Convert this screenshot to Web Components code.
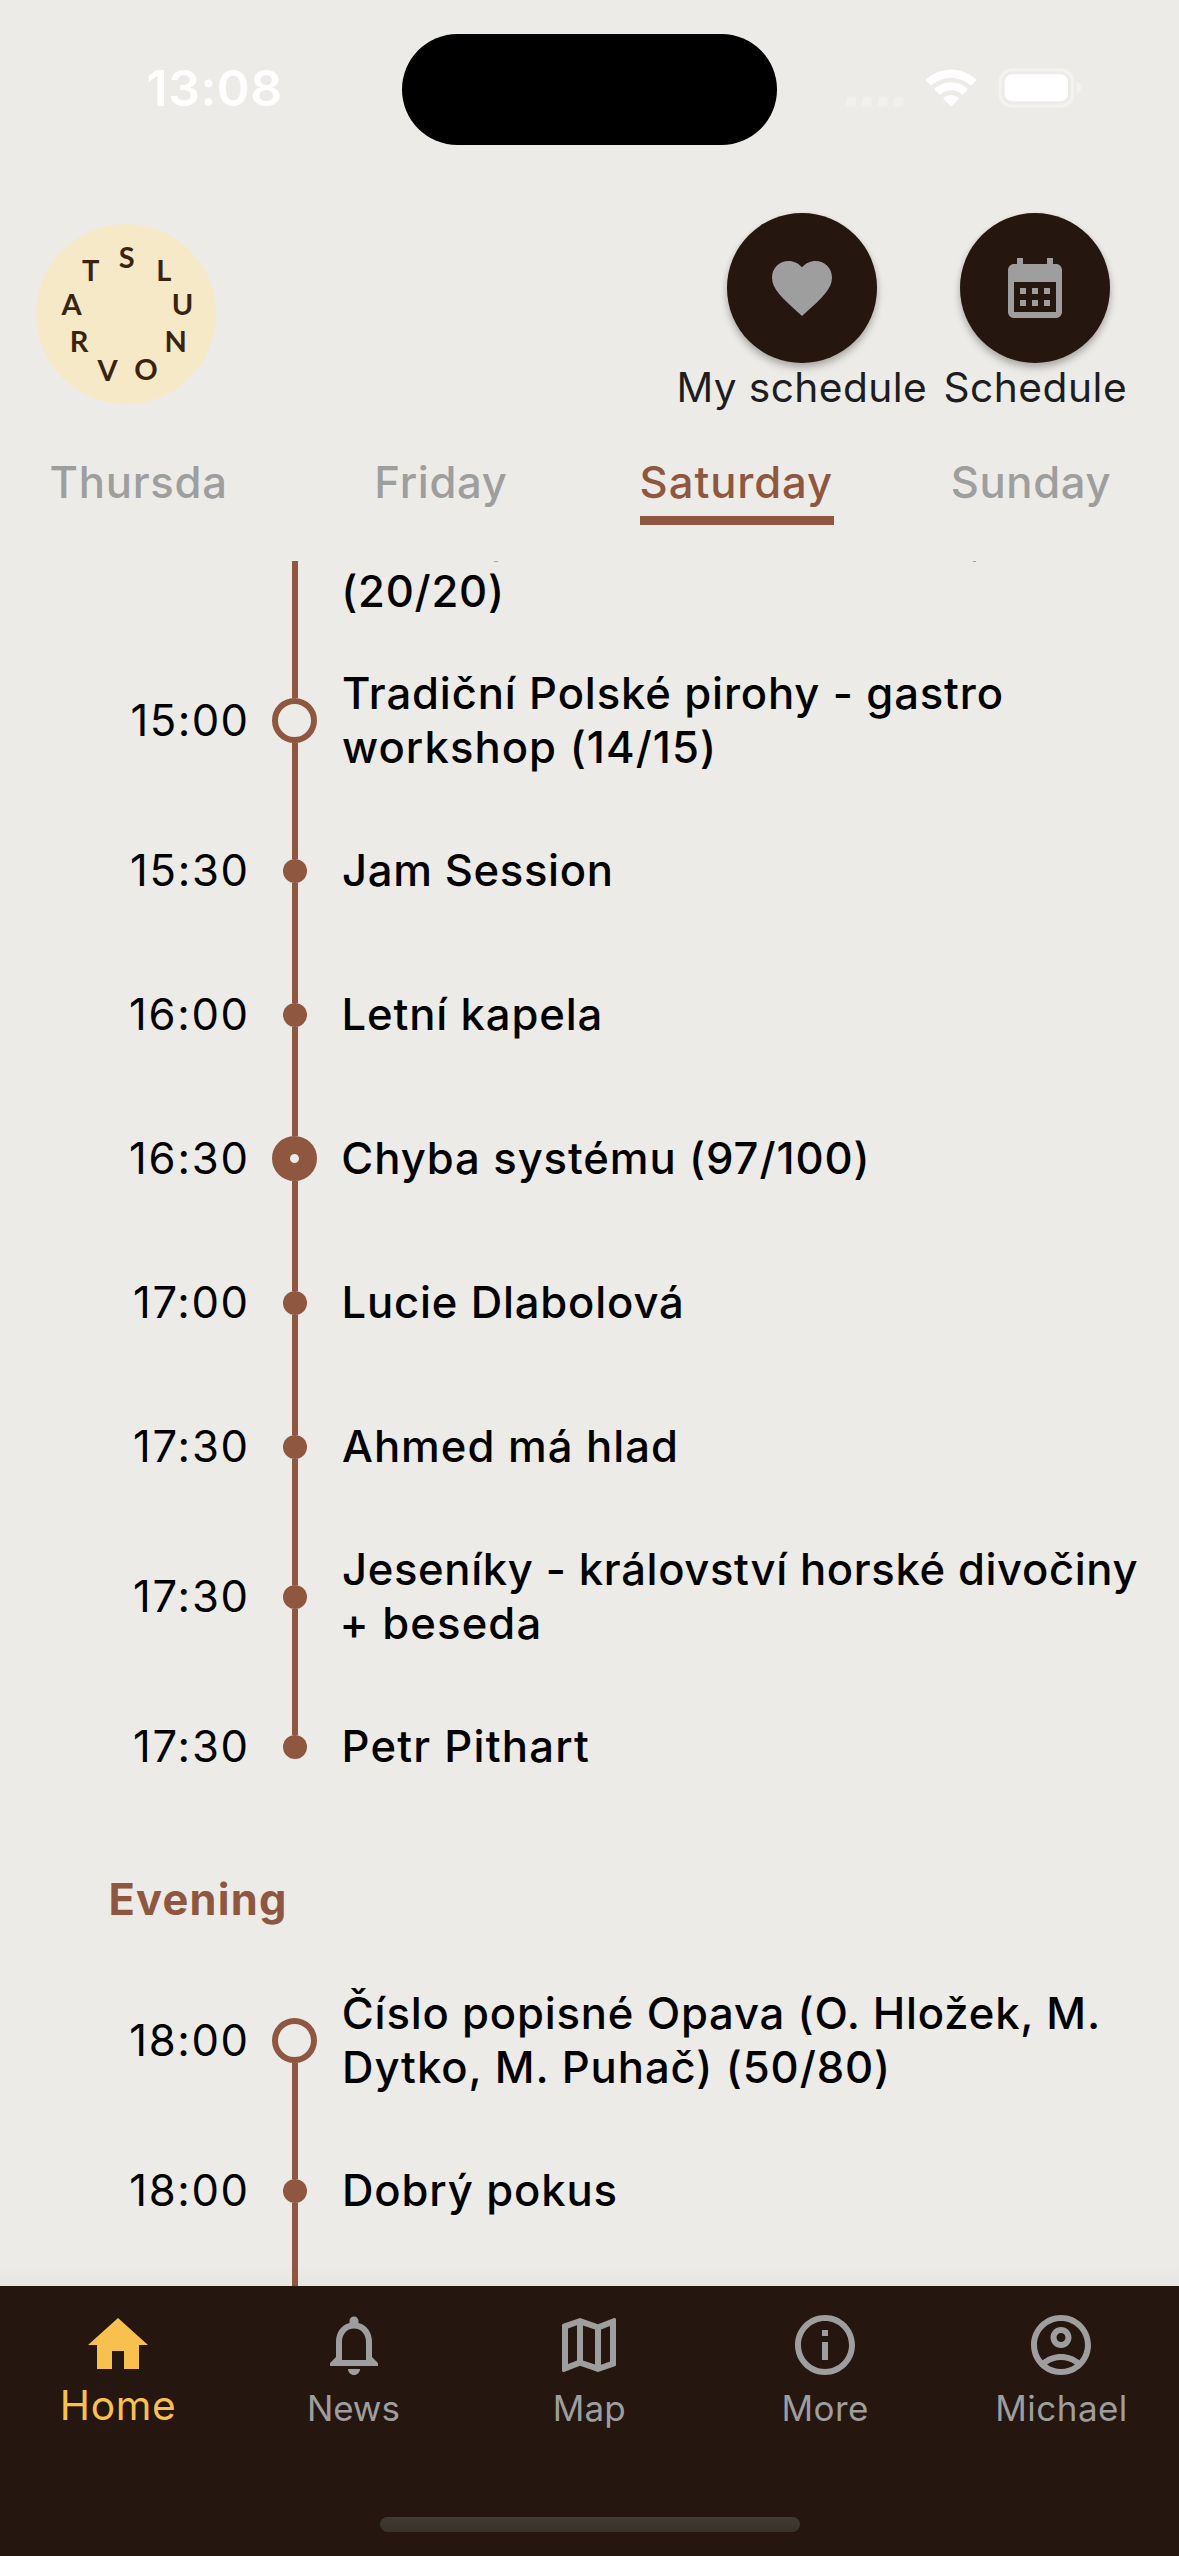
<!DOCTYPE html>
<html lang="en">
<head>
<meta charset="utf-8">
<title>Schedule</title>
<style>
  html, body { margin: 0; padding: 0; }
  body { width: 1179px; height: 2556px; overflow: hidden; background: #ecebe7; font-family: Inter, Roboto, "Liberation Sans", sans-serif; }
</style>
</head>
<body>
<festival-app></festival-app>

<template id="tpl-app">
  <style>
    :host { display: flex; flex-direction: column; width: 1179px; height: 2556px; background: #ecebe7; color: #000; }
    .list { flex: 1; min-height: 0; overflow: hidden; display: flex; flex-direction: column; position: relative; }
    .list > * { flex: none; }
    .fade { position: absolute; left: 0; right: 0; bottom: 0; height: 22px; background: linear-gradient(rgba(37,22,15,0), rgba(37,22,15,.025)); }
    .tabs { display: flex; height: 105px; padding-top: 20px; flex: none; }
  </style>
  <status-bar></status-bar>
  <app-header></app-header>
  <div class="tabs">
    <day-tab shift="20"><fit-text w="173.8" size="43.6" weight="500">Thursda</fit-text></day-tab>
    <day-tab><fit-text w="129.5" size="43.6" weight="500">Friday</fit-text></day-tab>
    <day-tab active><fit-text w="190.5" size="43.6" weight="500">Saturday</fit-text></day-tab>
    <day-tab><fit-text w="157.8" size="43.6" weight="500">Sunday</fit-text></day-tab>
  </div>
  <div class="list">
    <schedule-row part-top dot="none"><fit-text dx="2.3" w="154.6">(20/20)</fit-text></schedule-row>
    <schedule-row time="15:00" tw="113" dot="ring" tall><fit-text w="658.7">Tradiční Polské pirohy - gastro</fit-text><fit-text w="369">workshop (14/15)</fit-text></schedule-row>
    <schedule-row time="15:30" tw="113.5" dot="small"><fit-text w="267.7">Jam Session</fit-text></schedule-row>
    <schedule-row time="16:00" tw="114.5" dot="small"><fit-text dx="1.5" w="255">Letní kapela</fit-text></schedule-row>
    <schedule-row time="16:30" tw="114.5" dot="big"><fit-text dx=".3" w="522.2">Chyba systému (97/100)</fit-text></schedule-row>
    <schedule-row time="17:00" tw="110.5" dot="small"><fit-text dx="1.5" w="336.5">Lucie Dlabolová</fit-text></schedule-row>
    <schedule-row time="17:30" tw="110.5" dot="small"><fit-text w="332">Ahmed má hlad</fit-text></schedule-row>
    <schedule-row time="17:30" tw="110.5" dot="small" tall><fit-text w="794.5">Jeseníky - království horské divočiny</fit-text><fit-text dx=".4" w="195">+ beseda</fit-text></schedule-row>
    <schedule-row time="17:30" tw="110.5" dot="small" last><fit-text dx="1.5" w="243.6">Petr Pithart</fit-text></schedule-row>
    <section-title><fit-text w="173.5" size="43.4" weight="700">Evening</fit-text></section-title>
    <schedule-row time="18:00" tw="114.3" dot="ring" tall first><fit-text dx=".8" w="754">Číslo popisné Opava (O. Hložek, M.</fit-text><fit-text dx="2" w="542">Dytko, M. Puhač) (50/80)</fit-text></schedule-row>
    <schedule-row time="18:00" tw="114.3" dot="small"><fit-text dx="2" w="270.5">Dobrý pokus</fit-text></schedule-row>
    <schedule-row dot="none" tail></schedule-row>
    <div class="fade"></div>
  </div>
  <bottom-nav></bottom-nav>
</template>

<template id="tpl-status">
  <style>
    :host { display: flex; height: 177px; flex: none; box-sizing: border-box; padding-top: 33.5px; color: #fff; }
    .side { flex: 0 0 402px; box-sizing: border-box; height: 111px; display: flex; }
    .time { padding: 25px 0 0 148.6px; line-height: 58px; }
    .island { width: 375px; height: 111px; border-radius: 56px; background: #000; flex: none; }
    .icons { padding-left: 69px; padding-top: 34px; align-items: flex-start; }
    svg { display: block; flex: none; }
  </style>
  <div class="side"><div class="time"><fit-text w="131.6" size="50" weight="600">13:08</fit-text></div></div>
  <div class="island"></div>
  <div class="side icons">
    <svg width="236" height="42" viewBox="0 0 236 42">
      <g fill="#f1f0ee"><rect x="0" y="28.5" width="10" height="10" rx="3.5"/><rect x="15.9" y="28.5" width="10" height="10" rx="3.5"/><rect x="31.8" y="28.5" width="10" height="10" rx="3.5"/><rect x="47.7" y="28.5" width="10" height="10" rx="3.5"/></g>
      <g fill="#fff" transform="translate(79.6 1.4)">
        <path d="M.8 11.4Q0 10.7.8 9.9A36 36 0 0 1 50.2 9.9Q51 10.7 50.2 11.4L46.2 15.6Q45.5 16.2 44.8 15.5A30 30 0 0 0 6.2 15.5Q5.5 16.2 4.8 15.6Z"/>
        <path d="M9.4 20.6Q8.7 19.9 9.4 19.2A23.5 23.5 0 0 1 41.6 19.2Q42.3 19.9 41.6 20.6L37.5 24.8Q36.8 25.4 36.1 24.8A16.5 16.5 0 0 0 14.9 24.8Q14.2 25.4 13.5 24.8Z"/>
        <path d="M18.1 29.9Q17.3 29 18.1 28.4A11 11 0 0 1 32.9 28.4Q33.7 29 32.9 29.9L26.2 36.7Q25.5 37.3 24.8 36.7Z"/>
      </g>
      <rect x="154.2" y="2" width="72.2" height="36" rx="11.5" fill="none" stroke="#f4f3f1" stroke-width="3"/>
      <rect x="158.6" y="6.3" width="63.4" height="27" rx="7.5" fill="#fff"/>
      <path d="M230.6 13.8q4.400 2 4.400 6t-4.400 6z" fill="#f4f3f1"/>
    </svg>
  </div>
</template>

<template id="tpl-header">
  <style>
    :host { display: flex; justify-content: space-between; height: 259px; flex: none; box-sizing: border-box; padding: 36px 54px 0 36px; color: #1d1d1f; }
    .logo { margin-top: 10.5px; display: block; flex: none; }
    .actions { display: flex; gap: 20.4px; }
  </style>
  <svg class="logo" width="180" height="180" viewBox="36 223.5 180 180">
    <circle cx="126" cy="313.5" r="90" fill="#f5e9c8"/>
    <g fill="#3a2410" font-family="Lato, sans-serif" font-weight="700" font-size="29" text-anchor="middle">
      <text x="126.8" y="267.5">S</text><text x="163.9" y="280.7">L</text><text x="182.5" y="314">U</text><text x="175.7" y="351.6">N</text><text x="146" y="379.6">O</text><text x="107.6" y="380">V</text><text x="79" y="351.6">R</text><text x="71.5" y="314">A</text><text x="90.7" y="280.7">T</text>
    </g>
  </svg>
  <div class="actions">
    <round-action>
      <svg slot="icon" width="72" height="72" viewBox="0 0 24 24" fill="#9e9e9e"><path d="M12 21.35l-1.45-1.32C5.4 15.36 2 12.28 2 8.5 2 5.42 4.42 3 7.5 3c1.74 0 3.41.81 4.5 2.09C13.09 3.81 14.76 3 16.5 3 19.58 3 22 5.42 22 8.5c0 3.78-3.4 6.86-8.55 11.54L12 21.35z"/></svg>
      <fit-text w="245.6" size="40.7" weight="400">My schedule</fit-text>
    </round-action>
    <round-action>
      <svg slot="icon" width="72" height="72" viewBox="0 0 24 24" fill="#9e9e9e"><path d="M19 4h-1V2h-2v2H8V2H6v2H5c-1.11 0-1.99.9-1.99 2L3 20c0 1.1.89 2 2 2h14c1.1 0 2-.9 2-2V6c0-1.100-.9-2-2-2zm0 16H5V10h14v10zM9 14H7v-2h2v2zm4 0h-2v-2h2v2zm4 0h-2v-2h2v2zm-8 4H7v-2h2v2zm4 0h-2v-2h2v2zm4 0h-2v-2h2v2z"/></svg>
      <fit-text w="179.6" size="40.7" weight="400">Schedule</fit-text>
    </round-action>
  </div>
</template>

<template id="tpl-action">
  <style>
    :host { display: flex; flex-direction: column; align-items: center; }
    .disc { width: 150px; height: 150px; border-radius: 50%; background: #25160f; display: flex; align-items: center; justify-content: center; flex: none; box-shadow: 0 3px 6px rgba(0,0,0,.18), 0 6px 9px rgba(0,0,0,.14); }
    ::slotted(svg) { display: block; }
    .label { margin-top: -2px; line-height: 54px; display: flex; position: relative; }
  </style>
  <div class="disc"><slot name="icon"></slot></div>
  <div class="label"><slot></slot></div>
</template>

<template id="tpl-tab">
  <style>
    :host { flex: 0 0 294.75px; box-sizing: border-box; display: flex; flex-direction: column; align-items: center; line-height: 54px; color: #9e9e9e; }
    :host([active]) { color: #8f573f; }
    :host([shift]) { padding-right: 20px; }
    .bar { height: 9px; width: 194.5px; margin-top: 6px; }
    :host([active]) .bar { background: #8f573f; }
    .label { display: flex; }
  </style>
  <div class="label"><slot></slot></div><div class="bar"></div>
</template>

<template id="tpl-row">
  <style>
    :host { display: grid; grid-template-columns: 245.6px 98px 1fr; height: 144px; line-height: 54px; --c: #8f573f; }
    :host([tall]) { height: 156px; }
    :host([part-top]) { height: 81.5px; }
    :host([tail]) { height: 23.5px; }
    .time { display: flex; justify-content: flex-end; align-items: center; }
    .marker { display: flex; flex-direction: column; align-items: center; }
    .seg { flex: 1; width: 6px; background: var(--c); }
    :host([first]) .seg.top, :host([last]) .seg.bot { background: none; }
    .dot { flex: none; box-sizing: border-box; border-radius: 50%; }
    :host([dot="small"]) .dot { width: 24px; height: 24px; background: var(--c); }
    :host([dot="ring"]) .dot { width: 45px; height: 45px; border: 6px solid var(--c); }
    :host([dot="big"]) .dot { width: 45px; height: 45px; border: 18px solid var(--c); }
    .title { display: flex; flex-direction: column; justify-content: center; align-items: flex-start; margin-left: -.6px; }
    .tails { display: none; }
    :host([part-top]) .title { justify-content: flex-start; }
    :host([part-top]) .tails { display: flex; height: 4px; padding-left: 151px; gap: 475px; }
    .tails i { width: 3.5px; height: 1px; background: #a5a4a1; }
  </style>
  <div class="time"></div>
  <div class="marker"><div class="seg top"></div><div class="dot"></div><div class="seg bot"></div></div>
  <div class="title"><div class="tails"><i></i><i></i></div><slot></slot></div>
</template>

<template id="tpl-section">
  <style>
    :host { display: flex; align-items: center; height: 144px; box-sizing: border-box; padding: 17px 0 0 110.4px; line-height: 54px; color: #8f573f; }
  </style>
  <slot></slot>
</template>

<template id="tpl-nav">
  <style>
    :host { display: flex; flex-direction: column; align-items: center; justify-content: space-between; height: 270px; flex: none; box-sizing: border-box; background: #25160f; padding: 23px 0 24px; }
    .items { display: flex; width: 100%; }
    .pill { width: 420px; height: 15px; border-radius: 8px; background: linear-gradient(#403a36, #38312c); }
  </style>
  <div class="items">
    <nav-item active><svg slot="icon" width="72" height="72" viewBox="0 0 24 24"><path d="M10 20v-6h4v6h5v-8h3L12 3 2 12h3v8z"/></svg><fit-text w="111.4" size="40.7" weight="400">Home</fit-text></nav-item>
    <nav-item><svg slot="icon" width="72" height="72" viewBox="0 0 24 24"><path d="M12 22c1.1 0 2-.9 2-2h-4c0 1.1.9 2 2 2zm6-6v-5c0-3.07-1.63-5.64-4.5-6.32V4c0-.83-.67-1.5-1.5-1.5s-1.5.67-1.5 1.5v.68C7.64 5.36 6 7.92 6 11v5l-2 2v1h16v-1l-2-2zm-2 1H8v-6c0-2.48 1.51-4.5 4-4.5s4 2.02 4 4.5v6z"/></svg><fit-text w="88.4" size="35" weight="400">News</fit-text></nav-item>
    <nav-item><svg slot="icon" width="72" height="72" viewBox="0 0 24 24"><path d="M20.5 3l-.16.03L15 5.1 9 3 3.36 4.9c-.21.07-.36.25-.36.48V20.5c0 .28.22.5.5.5l.16-.03L9 18.9l6 2.1 5.64-1.9c.21-.07.36-.25.36-.48V3.5c0-.28-.22-.5-.5-.5zM10 5.47l4 1.4v11.66l-4-1.4V5.47zm-5 .99l3-1.01v11.7l-3 1.16V6.46zm14 11.08l-3 1.01V6.86l3-1.16v11.84z"/></svg><fit-text w="68.6" size="35" weight="400">Map</fit-text></nav-item>
    <nav-item><svg slot="icon" width="72" height="72" viewBox="0 0 24 24"><path d="M11 7h2v2h-2zm0 4h2v6h-2zm1-9C6.48 2 2 6.48 2 12s4.48 10 10 10 10-4.48 10-10S17.52 2 12 2zm0 18c-4.41 0-8-3.59-8-8s3.59-8 8-8 8 3.59 8 8-3.59 8-8 8z"/></svg><fit-text w="82.6" size="35" weight="400">More</fit-text></nav-item>
    <nav-item><svg slot="icon" width="72" height="72" viewBox="0 0 24 24"><path d="M12 2C6.48 2 2 6.48 2 12s4.48 10 10 10 10-4.48 10-10S17.52 2 12 2zM7.35 18.5C8.66 17.56 10.26 17 12 17s3.34.56 4.65 1.5C15.34 19.44 13.74 20 12 20s-3.34-.56-4.65-1.5zm10.79-1.38C16.45 15.8 14.32 15 12 15s-4.45.8-6.14 2.12C4.7 15.73 4 13.95 4 12c0-4.42 3.58-8 8-8s8 3.58 8 8c0 1.95-.7 3.73-1.86 5.12zM12 6c-1.93 0-3.5 1.57-3.5 3.5S10.07 13 12 13s3.5-1.57 3.5-3.5S13.93 6 12 6zm0 5c-.83 0-1.5-.67-1.5-1.5S11.17 8 12 8s1.5.67 1.5 1.5S12.83 11 12 11z"/></svg><fit-text w="126.6" size="35" weight="400">Michael</fit-text></nav-item>
  </div>
  <div class="pill"></div>
</template>

<template id="tpl-navitem">
  <style>
    :host { flex: 1 1 0; min-width: 0; display: flex; flex-direction: column; align-items: center; color: #9e9e9e; fill: #9e9e9e; line-height: 42px; }
    :host([active]) { color: #f8c04f; fill: #f8c04f; line-height: 48px; }
    ::slotted(svg) { display: block; }
    .label { display: flex; margin-top: 6px; padding-left: 1px; }
    :host([active]) .label { margin-top: 1px; }
  </style>
  <slot name="icon"></slot>
  <div class="label"><slot></slot></div>
</template>

<script>
  const FAMILY = 'Inter, Roboto, "Liberation Sans", sans-serif';
  const pen = document.createElement('canvas').getContext('2d');

  class Base extends HTMLElement {
    constructor(id) {
      super();
      this.attachShadow({ mode: 'open' }).append(document.getElementById(id).content.cloneNode(true));
    }
  }

  // One line of text whose tracking is set so that its visible glyphs span exactly `w` pixels.
  class FitText extends HTMLElement {
    constructor() {
      super();
      this.attachShadow({ mode: 'open' }).innerHTML =
        '<style>:host{display:block;flex:none;white-space:nowrap}</style><slot></slot>';
    }
    connectedCallback() {
      const text = this.textContent;
      const size = parseFloat(this.getAttribute('size') || 43.6);
      const weight = this.getAttribute('weight') || '500';
      const dx = parseFloat(this.getAttribute('dx') || 0);
      pen.font = `${weight} ${size}px ${FAMILY}`;
      const m = pen.measureText(text);
      const ink = m.actualBoundingBoxLeft + m.actualBoundingBoxRight;
      const gap = (parseFloat(this.getAttribute('w')) - ink) / ([...text].length - 1);
      Object.assign(this.style, {
        fontFamily: FAMILY, fontSize: size + 'px', fontWeight: weight,
        letterSpacing: gap + 'px',
        marginLeft: m.actualBoundingBoxLeft + dx + 'px',
        marginRight: -(gap + m.width - m.actualBoundingBoxRight) + 'px'
      });
    }
  }

  class ScheduleRow extends Base {
    constructor() { super('tpl-row'); }
    connectedCallback() {
      const cell = this.shadowRoot.querySelector('.time');
      if (this.hasAttribute('time') && !cell.firstChild) {
        const t = document.createElement('fit-text');
        t.setAttribute('w', this.getAttribute('tw'));
        t.setAttribute('weight', '400');
        t.textContent = this.getAttribute('time');
        cell.append(t);
      }
    }
  }

  customElements.define('fit-text', FitText);
  customElements.define('schedule-row', ScheduleRow);
  for (const [tag, id] of [
    ['status-bar', 'tpl-status'], ['round-action', 'tpl-action'], ['app-header', 'tpl-header'],
    ['day-tab', 'tpl-tab'], ['section-title', 'tpl-section'], ['nav-item', 'tpl-navitem'],
    ['bottom-nav', 'tpl-nav'], ['festival-app', 'tpl-app']
  ]) customElements.define(tag, class extends Base { constructor() { super(id); } });
</script>
</body>
</html>
